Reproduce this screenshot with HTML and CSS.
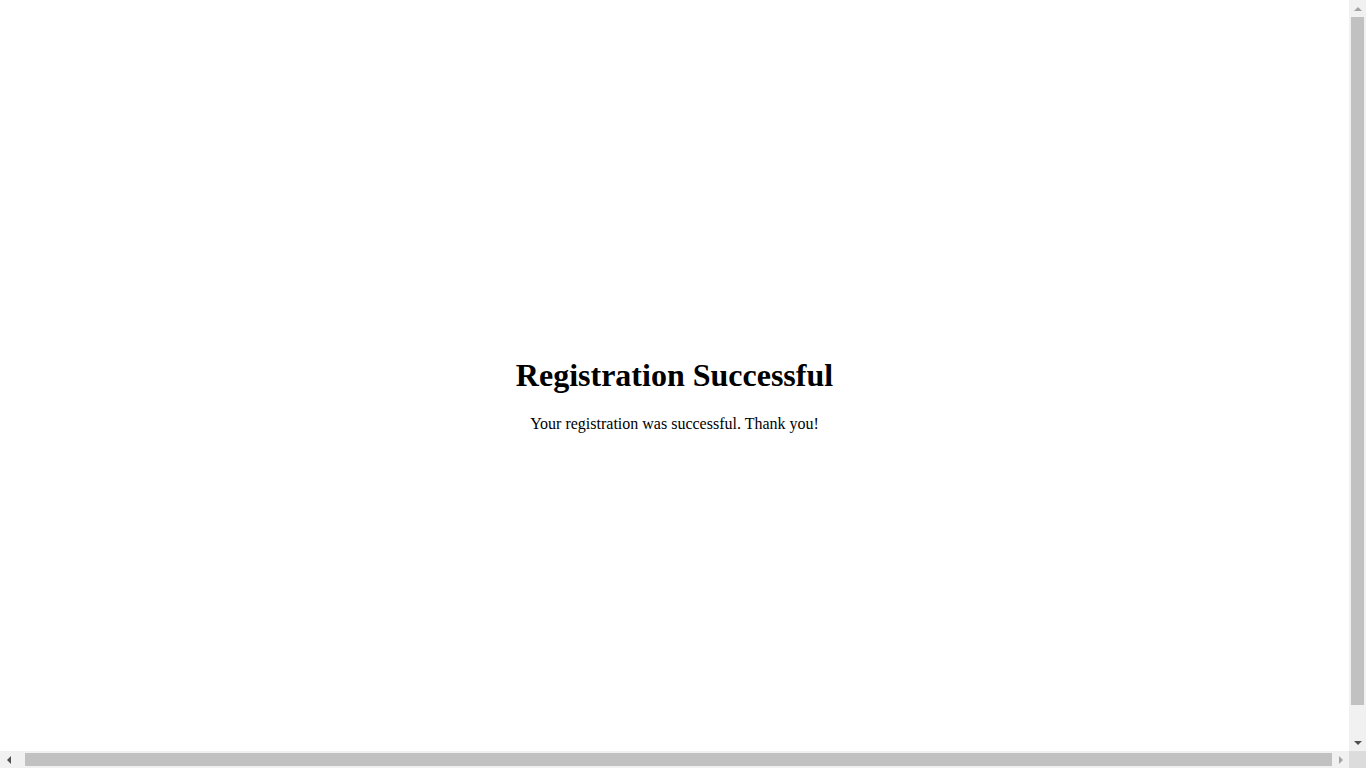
FILE: index.html
```html
<!DOCTYPE html>
<html lang="en">
<head>
<meta charset="utf-8">
<title>Registration Successful</title>
<link rel="stylesheet" href="styles.css">
</head>
<body>
<div class="page">
  <div class="message">
    <h1 class="title">Registration Successful</h1>
    <p class="text">Your registration was successful. Thank you!</p>
  </div>
</div>

<div class="vbar" aria-hidden="true">
  <div class="sb-btn">
    <svg width="8" height="4" viewBox="0 0 8 4"><polygon points="0,4 8,4 4,0" class="arrow-off"/></svg>
  </div>
  <div class="vtrack"><div class="vthumb"></div></div>
  <div class="sb-btn">
    <svg width="8" height="4" viewBox="0 0 8 4"><polygon points="0,0 8,0 4,4" class="arrow-on"/></svg>
  </div>
</div>
<div class="hbar" aria-hidden="true">
  <div class="sb-btn">
    <svg width="4" height="8" viewBox="0 0 4 8"><polygon points="4,0 4,8 0,4" class="arrow-on"/></svg>
  </div>
  <div class="htrack"><div class="hthumb"></div></div>
  <div class="sb-btn">
    <svg width="4" height="8" viewBox="0 0 4 8"><polygon points="0,0 0,8 4,4" class="arrow-off"/></svg>
  </div>
</div>
<div class="corner" aria-hidden="true"></div>
</body>
</html>
```
FILE: styles.css
```css
html {
  background: #fff;
  padding-right: 17px;
}
body {
  margin: 8px;
  font-family: "Liberation Serif", "Times New Roman", serif;
  color: #000;
}
.page {
  display: flex;
  align-items: center;
  justify-content: center;
  height: 100vh;
}
.message {
  text-align: center;
}
.title {
  font-size: 2em;
  font-weight: bold;
  margin: 0.67em 0;
}
.text {
  font-size: 16px;
  margin: 1em 0;
}

/* scrollbars */
.vbar {
  position: fixed;
  top: 0;
  right: 0;
  bottom: 17px;
  width: 17px;
  background: #f1f1f1;
  display: flex;
  flex-direction: column;
}
.hbar {
  position: fixed;
  left: 0;
  right: 17px;
  bottom: 0;
  height: 17px;
  background: #f1f1f1;
  display: flex;
}
.corner {
  position: fixed;
  right: 0;
  bottom: 0;
  width: 17px;
  height: 17px;
  background: #dcdcdc;
}
.sb-btn {
  flex: 0 0 17px;
  display: flex;
  align-items: center;
  justify-content: center;
}
.sb-btn svg {
  display: block;
}
.arrow-on {
  fill: #505050;
}
.arrow-off {
  fill: #a3a3a3;
}
.vtrack {
  flex: 1;
  padding: 0 2px;
}
.vthumb {
  height: 688px;
  background: #c1c1c1;
}
.htrack {
  flex: 1;
  display: flex;
  justify-content: flex-end;
  padding: 2px 0;
}
.hthumb {
  width: 1307px;
  background: #c1c1c1;
}
```
